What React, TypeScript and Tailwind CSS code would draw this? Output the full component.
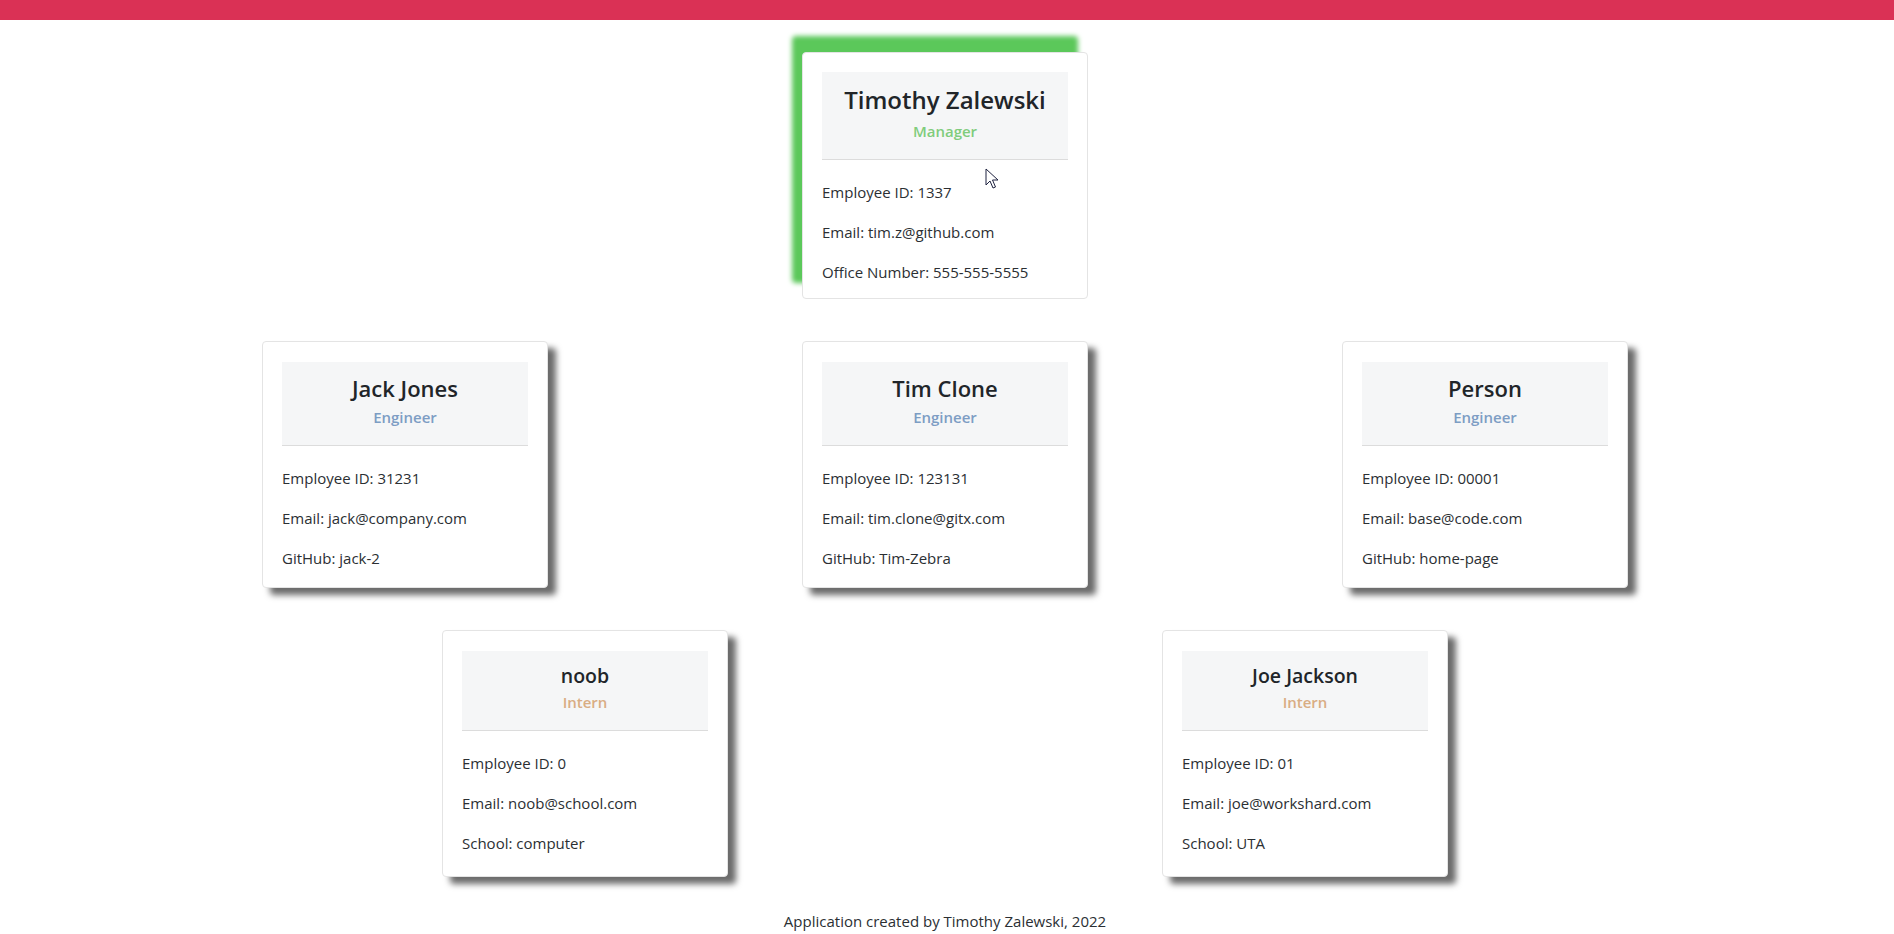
import React from 'react';

type Member = {
  name: string;
  role: 'Manager' | 'Engineer' | 'Intern';
  id: string;
  email: string;
  extra: string;
};

const manager: Member = {
  name: 'Timothy Zalewski',
  role: 'Manager',
  id: '1337',
  email: 'tim.z@github.com',
  extra: 'Office Number: 555-555-5555',
};

const engineers: Member[] = [
  { name: 'Jack Jones', role: 'Engineer', id: '31231', email: 'jack@company.com', extra: 'GitHub: jack-2' },
  { name: 'Tim Clone', role: 'Engineer', id: '123131', email: 'tim.clone@gitx.com', extra: 'GitHub: Tim-Zebra' },
  { name: 'Person', role: 'Engineer', id: '00001', email: 'base@code.com', extra: 'GitHub: home-page' },
];

const interns: Member[] = [
  { name: 'noob', role: 'Intern', id: '0', email: 'noob@school.com', extra: 'School: computer' },
  { name: 'Joe Jackson', role: 'Intern', id: '01', email: 'joe@workshard.com', extra: 'School: UTA' },
];

const Card = ({ member }: { member: Member }) => {
  const isManager = member.role === 'Manager';
  const isIntern = member.role === 'Intern';

  return (
    <div
      className={
        isManager
          ? 'w-[286px] h-[247px] bg-white border border-[#e4e4e4] rounded-[4px] px-[19px] pt-[19px] shadow-[-10px_-16px_5px_#5bc85a]'
          : 'w-[286px] h-[247px] bg-white border border-[#e4e4e4] rounded-[4px] px-[19px] pt-[20px] shadow-[8px_7px_6px_#6b6b6b]'
      }
    >
      <div
        className={
          isManager
            ? 'bg-[#f5f6f7] border-b border-[#dcdcdc] text-center pt-[13px] pb-4'
            : 'bg-[#f5f6f7] border-b border-[#dcdcdc] text-center pt-3 pb-4'
        }
      >
        <h4
          className={
            isManager
              ? 'text-[24px] leading-[30px] font-semibold text-[#212529]'
              : isIntern
              ? 'text-[19.5px] leading-[25px] font-semibold text-[#212529]'
              : 'text-[22px] leading-[29px] font-semibold text-[#212529]'
          }
        >
          {member.name}
        </h4>
        <div
          className={
            isManager
              ? 'mt-1 text-[15px] leading-6 font-semibold text-[#80cc7c]'
              : isIntern
              ? 'mt-[2px] text-[15px] leading-6 font-semibold text-[#d9ad83]'
              : 'mt-[2px] text-[15px] leading-6 font-semibold text-[#7d9dc4]'
          }
        >
          {member.role}
        </div>
      </div>
      <div className="pt-[20px] flex flex-col gap-4 text-[15px] leading-6 text-[#2b2f33]">
        <p>Employee ID: {member.id}</p>
        <p>Email: {member.email}</p>
        <p>{member.extra}</p>
      </div>
    </div>
  );
};

const Cursor = () => (
  <svg className="absolute left-[985px] top-[168px]" width="14" height="22" viewBox="0 0 14 22">
    <path
      d="M1 1 L1 17 L5 13 L8 20 L10.5 19 L7.5 12 L13 12 Z"
      fill="#ffffff"
      stroke="#1f2340"
      strokeWidth="1"
      strokeLinejoin="round"
    />
  </svg>
);

export default function App() {
  return (
    <div className="relative min-h-screen bg-white font-['Open_Sans','Noto_Sans',sans-serif]">
      <div className="h-[20px] bg-[#da3155]" />
      <main className="pl-[8px] pr-[12px] pt-[32px] flex flex-col gap-[42px]">
        <div className="flex justify-evenly">
          <Card member={manager} />
        </div>
        <div className="flex justify-evenly">
          {engineers.map((m) => (
            <Card key={m.name} member={m} />
          ))}
        </div>
        <div className="flex justify-evenly">
          {interns.map((m) => (
            <Card key={m.name} member={m} />
          ))}
        </div>
      </main>
      <footer className="mt-[32px] pl-[8px] pr-[12px] text-center text-[15px] leading-6 text-[#2b2f33]">
        Application created by Timothy Zalewski, 2022
      </footer>
      <Cursor />
    </div>
  );
}
